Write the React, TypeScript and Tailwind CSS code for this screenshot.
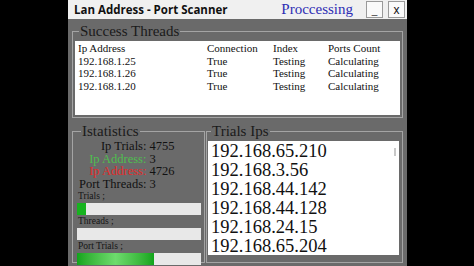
import React from "react"

const threads = [
  { ip: "192.168.1.25", conn: "True", index: "Testing", ports: "Calculating" },
  { ip: "192.168.1.26", conn: "True", index: "Testing", ports: "Calculating" },
  { ip: "192.168.1.20", conn: "True", index: "Testing", ports: "Calculating" },
]

const trialIps = [
  "192.168.65.210",
  "192.168.3.56",
  "192.168.44.142",
  "192.168.44.128",
  "192.168.24.15",
  "192.168.65.204",
]

const serif = { fontFamily: '"Liberation Serif", "Times New Roman", serif' }

function Bar({ label, fill }: { label: string; fill: React.ReactNode }) {
  return (
    <div className="flex flex-col">
      <span className="text-[9.5px] leading-[11px] text-[#151515] pl-[1px]">{label}</span>
      <div className="h-[12px] bg-[#e8e8e8] flex mt-[1px]">{fill}</div>
    </div>
  )
}

export default function App() {
  return (
    <div className="w-[474px] h-[266px] bg-black overflow-hidden flex" style={serif}>
      <div className="ml-[68px] w-[339px] h-full flex flex-col bg-[#6a6a6a]">
        {/* title bar */}
        <div className="h-[19px] bg-[#f0f0f0] flex items-center shrink-0">
          <span
            className="ml-[6px] text-[11.5px] font-bold text-[#111] leading-none"
            style={{ fontFamily: '"Open Sans", "Noto Sans", sans-serif' }}
          >
            Lan Address - Port Scanner
          </span>
          <span className="ml-auto mr-[13px] text-[15px] leading-none text-[#2d2db4]">Proccessing</span>
          <div className="w-[17px] h-[17px] border border-[#9a9a9a] bg-[#fafafa] flex items-end justify-center">
            <span className="text-[10px] leading-[12px] text-[#333]" style={{ fontFamily: '"Liberation Sans", sans-serif' }}>_</span>
          </div>
          <div className="ml-[5px] mr-[2px] w-[17px] h-[17px] border border-[#9a9a9a] bg-[#fafafa] flex items-center justify-center">
            <span className="text-[12px] leading-none text-[#111]" style={{ fontFamily: '"Liberation Sans", sans-serif' }}>x</span>
          </div>
        </div>

        {/* body */}
        <div className="flex-1 flex flex-col px-[4px] pt-[2px]">
          <fieldset className="border border-[#a4a4a4] px-[2px] pb-[2px]">
            <legend className="ml-[4px] px-[1px] text-[15px] leading-[20px] text-[#1a1a1a]">Success Threads</legend>
            <div className="h-[74px] bg-white pl-[3px] pt-[1px] text-[11px] leading-[12.5px] text-[#111]">
              <div className="grid grid-cols-[129px_66px_55px_1fr]">
                <span>Ip Address</span>
                <span>Connection</span>
                <span>Index</span>
                <span>Ports Count</span>
                {threads.map((t) => (
                  <React.Fragment key={t.ip}>
                    <span>{t.ip}</span>
                    <span>{t.conn}</span>
                    <span>{t.index}</span>
                    <span>{t.ports}</span>
                  </React.Fragment>
                ))}
              </div>
            </div>
          </fieldset>

          <div className="flex gap-[1px] mt-[3px]">
            <fieldset className="w-[133px] h-[142px] border border-[#a4a4a4] pl-[4px] pr-[3px]">
              <legend className="ml-[4px] px-[1px] text-[15px] leading-[20px] text-[#1a1a1a]">Istatistics</legend>
              <div className="grid grid-cols-[auto_1fr] gap-x-[3px] text-[12.5px] leading-[12.5px] text-[#111] pl-[2px] mt-[-1px]">
                <span className="text-right">Ip Trials:</span>
                <span>4755</span>
                <span className="text-right text-[#4fbf4f]">Ip Address:</span>
                <span>3</span>
                <span className="text-right text-[#e22b2b]">Ip Address:</span>
                <span>4726</span>
                <span className="text-right">Port Threads:</span>
                <span>3</span>
              </div>
              <div className="flex flex-col gap-[1px] mt-[1px]">
                <Bar label="Trials ;" fill={<div className="w-[9px] h-full bg-[#17b31f]" />} />
                <Bar label="Threads ;" fill={null} />
                <Bar
                  label="Port Trials ;"
                  fill={<div className="w-[77px] h-full bg-gradient-to-r from-[#0ea51a] via-[#6ddc6d] to-[#0ea51a]" />}
                />
              </div>
            </fieldset>

            <fieldset className="flex-1 h-[142px] border border-[#a4a4a4] pl-[1px] pr-[3px]">
              <legend className="ml-[3px] px-[1px] text-[15px] leading-[20px] text-[#1a1a1a]">Trials Ips</legend>
              <div className="relative h-[114px] bg-white pl-[3px] pt-[1px] text-[18.5px] leading-[19px] text-[#111] overflow-hidden">
                {trialIps.map((ip) => (
                  <div key={ip}>{ip}</div>
                ))}
                <div className="absolute right-[3px] top-[7px] w-[2px] h-[8px] bg-[#c8c8c8]" />
              </div>
            </fieldset>
          </div>
        </div>
      </div>
    </div>
  )
}
